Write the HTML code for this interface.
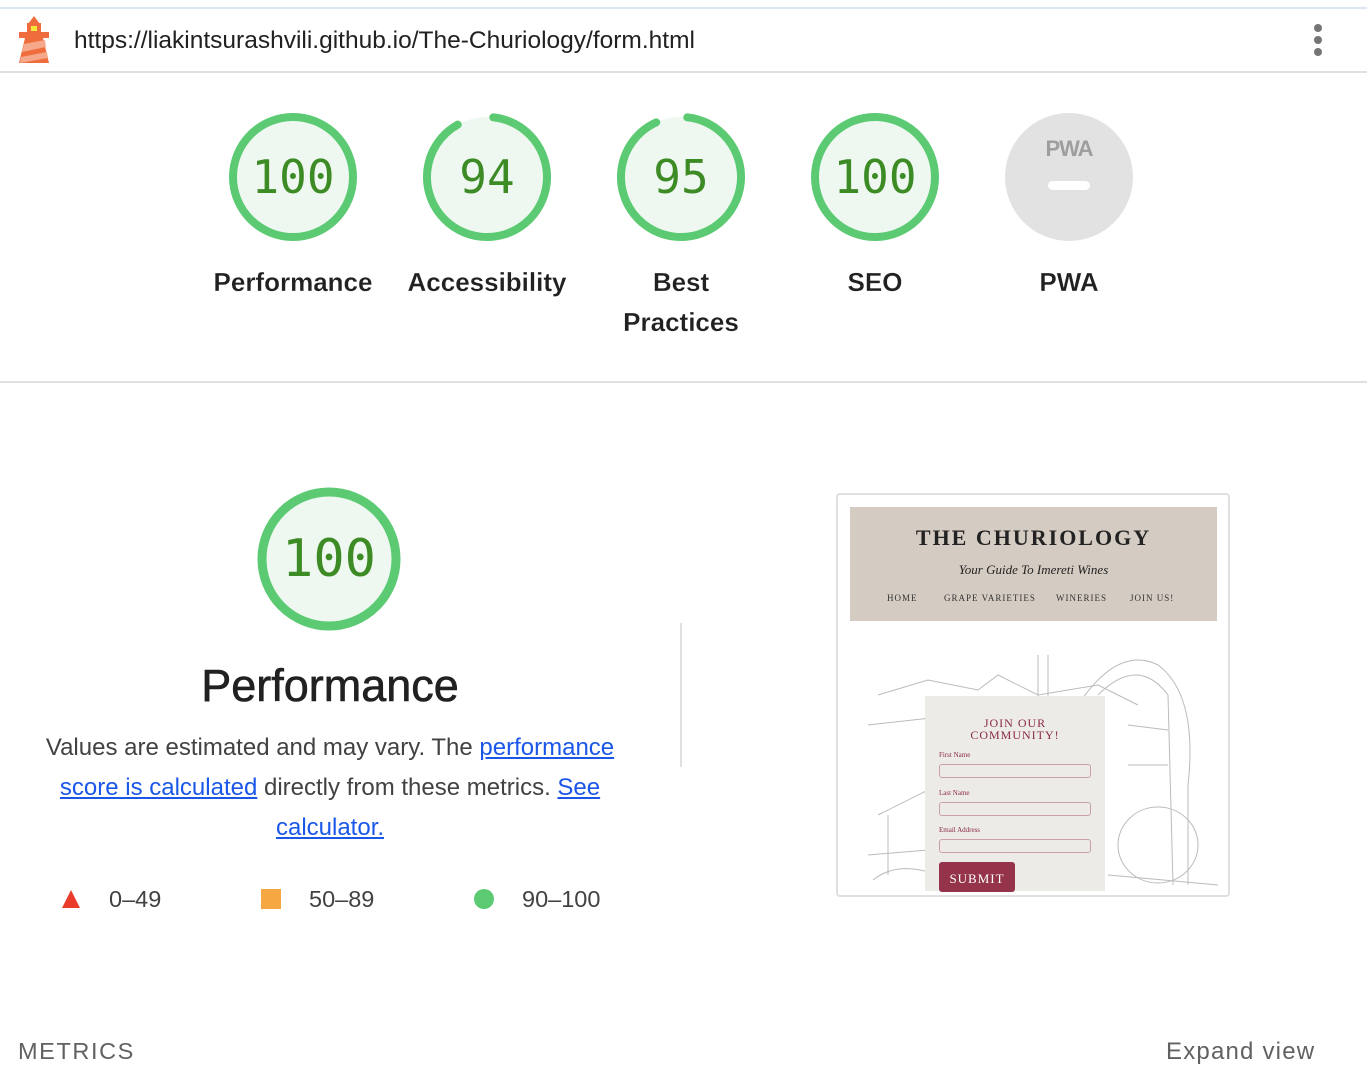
<!DOCTYPE html>
<html><head><meta charset="utf-8"><style>
*{margin:0;padding:0;box-sizing:border-box}
body{width:1367px;height:1087px;background:#fff;font-family:"Liberation Sans",Arial,sans-serif;position:relative;overflow:hidden;color:#212121}
.abs{position:absolute}
.g{position:absolute;width:136px;height:136px}
.num{position:absolute;left:0;width:136px;top:0;height:136px;line-height:136px;text-align:center;font-family:"DejaVu Sans Mono","Liberation Mono",monospace;font-size:46px;color:#3d8b25}
.lbl{position:absolute;width:220px;text-align:center;font-size:26px;line-height:40px;color:#212121;font-weight:bold;-webkit-text-stroke:0.2px #fff}
a{color:#1a57e8;text-decoration:underline}
.cap{font-family:"Liberation Serif",serif;letter-spacing:1px}
</style></head><body>
<div class="abs" style="left:0;top:7px;width:1367px;height:2px;background:#dfe6f3"></div>
<div class="abs" style="left:0;top:71px;width:1367px;height:2px;background:#e0e0e0"></div>
<svg class="abs" style="left:18px;top:16px" width="32" height="48" viewBox="0 0 32 48">
<polygon points="10,8 16,0 22,8" fill="#ef6c3d"/><rect x="9" y="7" width="14" height="10" fill="#ef6c3d"/><rect x="13" y="10" width="6" height="5" fill="#f7e93b"/><rect x="1" y="16" width="30" height="6" fill="#ef6c3d"/><polygon points="7,22 25,22 31,47 1,47" fill="#ef6c3d"/><polygon points="6,28 27,24 28,31 4,36" fill="#f5a98a"/><polygon points="3,41 29,36 30,42 2,47" fill="#f5a98a"/></svg>
<div class="abs" style="left:74px;top:27px;font-size:24.5px;color:#212121">https://liakintsurashvili.github.io/The-Churiology/form.html</div>
<div class="abs" style="left:1314px;top:24px;width:8px;height:8px;border-radius:50%;background:#757575"></div>
<div class="abs" style="left:1314px;top:36px;width:8px;height:8px;border-radius:50%;background:#757575"></div>
<div class="abs" style="left:1314px;top:48px;width:8px;height:8px;border-radius:50%;background:#757575"></div>

<svg class="g" style="left:225px;top:109px" viewBox="0 0 136 136"><circle cx="68" cy="68" r="60" fill="#eef8f1" stroke="#5bca72" stroke-width="8"/></svg><div class="num" style="left:225px;top:109px">100</div>
<svg class="g" style="left:419px;top:109px" viewBox="0 0 136 136"><circle cx="68" cy="68" r="60" fill="#eef8f1"/><circle cx="68" cy="68" r="60" fill="none" stroke="#5bca72" stroke-width="8" stroke-linecap="round" stroke-dasharray="340 377" transform="rotate(-84 68 68)"/></svg><div class="num" style="left:419px;top:109px">94</div>
<svg class="g" style="left:613px;top:109px" viewBox="0 0 136 136"><circle cx="68" cy="68" r="60" fill="#eef8f1"/><circle cx="68" cy="68" r="60" fill="none" stroke="#5bca72" stroke-width="8" stroke-linecap="round" stroke-dasharray="345 377" transform="rotate(-84 68 68)"/></svg><div class="num" style="left:613px;top:109px">95</div>
<svg class="g" style="left:807px;top:109px" viewBox="0 0 136 136"><circle cx="68" cy="68" r="60" fill="#eef8f1" stroke="#5bca72" stroke-width="8"/></svg><div class="num" style="left:807px;top:109px">100</div>
<svg class="g" style="left:1001px;top:109px" viewBox="0 0 136 136"><circle cx="68" cy="68" r="64" fill="#e2e2e2"/><text x="68" y="47" text-anchor="middle" font-family="Liberation Sans" font-weight="bold" font-size="22" letter-spacing="-1" fill="#9e9e9e">PWA</text><rect x="47" y="72" width="42" height="9" rx="4.5" fill="#fff"/></svg>
<div class="lbl" style="left:183px;top:262px">Performance</div>
<div class="lbl" style="left:377px;top:262px">Accessibility</div>
<div class="lbl" style="left:571px;top:262px">Best<br>Practices</div>
<div class="lbl" style="left:765px;top:262px">SEO</div>
<div class="lbl" style="left:959px;top:262px">PWA</div>
<div class="abs" style="left:0;top:381px;width:1367px;height:2px;background:#e0e0e0"></div>

<svg class="abs" style="left:256px;top:486px" width="146" height="146" viewBox="0 0 146 146"><circle cx="73" cy="73" r="67" fill="#eef8f1" stroke="#5bca72" stroke-width="9"/></svg>
<div class="num" style="left:256px;top:491px;width:146px;height:136px;font-size:52px">100</div>
<div class="abs" style="left:110px;top:660px;width:440px;text-align:center;font-size:45px;color:#212121;-webkit-text-stroke:0.6px #212121">Performance</div>
<div class="abs" style="left:10px;top:728px;width:640px;text-align:center;font-size:24px;line-height:40px;color:#424242">Values are estimated and may vary. The <a>performance</a><br><a>score is calculated</a> directly from these metrics. <a>See</a><br><a>calculator.</a></div>
<svg class="abs" style="left:61px;top:889px" width="20" height="20"><polygon points="10,1 19,19 1,19" fill="#eb3c2b"/></svg>
<div class="abs" style="left:109px;top:886px;font-size:23.5px;color:#424242">0–49</div>
<div class="abs" style="left:261px;top:889px;width:20px;height:20px;background:#f5a742"></div>
<div class="abs" style="left:309px;top:886px;font-size:23.5px;color:#424242">50–89</div>
<div class="abs" style="left:474px;top:889px;width:20px;height:20px;border-radius:50%;background:#5bca72"></div>
<div class="abs" style="left:522px;top:886px;font-size:23.5px;color:#424242">90–100</div>
<div class="abs" style="left:680px;top:623px;width:2px;height:144px;background:#e0e0e0"></div>

<div class="abs" style="left:836px;top:493px;width:394px;height:404px;border:2px solid #e0e0e0;border-radius:4px;background:#fff;overflow:hidden">
 <div class="abs" style="left:12px;top:12px;width:367px;height:114px;background:#d4cbc2"></div>
 <div class="abs cap" style="left:12px;top:30px;width:367px;text-align:center;font-size:22px;font-weight:bold;letter-spacing:2px;color:#222">THE CHURIOLOGY</div>
 <div class="abs" style="left:12px;top:67px;width:367px;text-align:center;font-size:13px;font-style:italic;font-family:'Liberation Serif',serif;color:#222">Your Guide To Imereti Wines</div>
 <div class="abs cap" style="left:49px;top:98px;font-size:9px;color:#333">HOME</div>
 <div class="abs cap" style="left:106px;top:98px;font-size:9px;color:#333">GRAPE VARIETIES</div>
 <div class="abs cap" style="left:218px;top:98px;font-size:9px;color:#333">WINERIES</div>
 <div class="abs cap" style="left:292px;top:98px;font-size:9px;color:#333">JOIN US!</div>
 <svg class="abs" style="left:0;top:140px" width="394" height="264" fill="none" stroke="#bbb" stroke-width="1">
  <path d="M40 60 L90 45 L140 55 L160 40 L200 60 L260 50 L300 70"/><path d="M30 90 L120 80 L200 85"/>
  <path d="M200 20 L200 120 M210 20 L210 110"/><path d="M240 70 Q280 10 320 30 Q360 60 350 150 L350 250"/>
  <path d="M260 60 Q300 20 330 60 L335 250"/><path d="M40 180 L100 150 L100 240 M50 180 L50 240"/>
  <path d="M30 220 L90 215 M35 245 Q60 225 100 240"/>
  <ellipse cx="320" cy="210" rx="40" ry="38"/><path d="M270 240 L380 250"/>
  <path d="M215 80 L250 80 M215 100 L255 100 M215 130 L260 130 M290 90 L330 95 M290 130 L330 130"/>
 </svg>
 <div class="abs" style="left:87px;top:201px;width:180px;height:195px;background:#ecebe8"></div>
 <div class="abs cap" style="left:87px;top:222px;width:180px;text-align:center;font-size:12px;line-height:12px;color:#8a2a40">JOIN OUR<br>COMMUNITY!</div>
 <div class="abs" style="left:101px;top:256px;font-family:'Liberation Serif',serif;font-size:7px;color:#8a2a40">First Name</div>
 <div class="abs" style="left:101px;top:269px;width:152px;height:14px;border:1px solid #c9a0a8;border-radius:3px"></div>
 <div class="abs" style="left:101px;top:294px;font-family:'Liberation Serif',serif;font-size:7px;color:#8a2a40">Last Name</div>
 <div class="abs" style="left:101px;top:307px;width:152px;height:14px;border:1px solid #c9a0a8;border-radius:3px"></div>
 <div class="abs" style="left:101px;top:331px;font-family:'Liberation Serif',serif;font-size:7px;color:#8a2a40">Email Address</div>
 <div class="abs" style="left:101px;top:344px;width:152px;height:14px;border:1px solid #c9a0a8;border-radius:3px"></div>
 <div class="abs cap" style="left:101px;top:367px;width:76px;height:30px;background:#95334a;border-radius:3px;color:#fff;font-size:13px;text-align:center;padding-top:9px">SUBMIT</div>
</div>

<div class="abs" style="left:18px;top:1038px;font-size:23.5px;letter-spacing:1.6px;color:#616161">METRICS</div>
<div class="abs" style="left:1166px;top:1038px;font-size:24px;letter-spacing:1.2px;color:#616161">Expand view</div>
</body></html>
